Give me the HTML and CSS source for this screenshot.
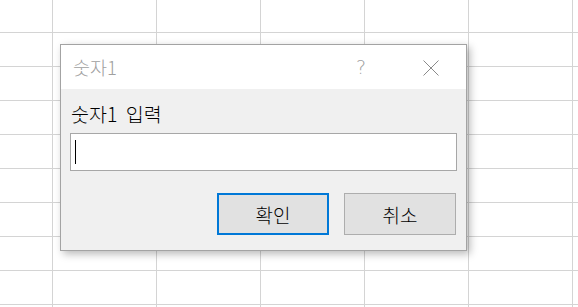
FILE: index.html
```html
<!DOCTYPE html>
<html lang="ko">
<head>
<meta charset="utf-8">
<link rel="stylesheet" href="styles.css">
</head>
<body>
<div class="sheet"></div>
<div class="dialog">
  <div class="titlebar">
    <span class="title">숫자1</span>
    <span class="help">?</span>
    <svg class="close" width="16" height="16" viewBox="0 0 16 16"><path d="M0.5 0.5 L15.5 15.5 M15.5 0.5 L0.5 15.5" stroke="#8a8a8a" stroke-width="1" fill="none"/></svg>
  </div>
  <div class="content">
    <div class="label">숫자1 입력</div>
    <div class="input"><span class="caret"></span></div>
    <div class="buttons">
      <div class="btn btn-default">확인</div>
      <div class="btn">취소</div>
    </div>
  </div>
</div>
</body>
</html>
```

FILE: styles.css
```css
html, body {
  margin: 0;
  padding: 0;
  width: 578px;
  height: 307px;
  overflow: hidden;
  background: #fff;
}
.sheet {
  width: 578px;
  height: 307px;
  background-color: #fff;
  background-image:
    linear-gradient(to bottom, transparent 33px, #d4d4d4 33px, #d4d4d4 34px),
    linear-gradient(to right, transparent 103px, #d4d4d4 103px, #d4d4d4 104px);
  background-size: 100% 34px, 104px 100%;
  background-position: 0 -1px, -51px 0;
}
.dialog {
  position: absolute;
  left: 60px;
  top: 44px;
  width: 405px;
  height: 205px;
  border: 1px solid #a3a3a3;
  background: #f0f0f0;
  box-shadow: 3px 3px 8px rgba(0, 0, 0, 0.28);
  display: flex;
  flex-direction: column;
  font-family: "Noto Sans CJK KR", "Noto Sans", sans-serif;
  font-weight: 300;
}
.titlebar {
  height: 44px;
  background: #fff;
  display: flex;
  align-items: center;
  padding-left: 12px;
  padding-right: 27px;
}
.title {
  font-size: 18.5px;
  color: #a0a0a0;
  flex: 1;
  margin-top: -1px;
}
.help {
  font-family: "DejaVu Sans", sans-serif;
  font-weight: 200;
  font-size: 19px;
  color: #a0a0a0;
  margin-right: 57px;
  margin-top: -1px;
}
.close {
  display: block;
  margin-top: 1px;
}
.content {
  flex: 1;
  padding: 13px 9px 0 9px;
  display: flex;
  flex-direction: column;
}
.label {
  font-size: 19.5px;
  color: #000;
  line-height: 24px;
  padding-left: 1px;
  word-spacing: 3px;
}
.input {
  box-sizing: border-box;
  margin-top: 7px;
  height: 38px;
  width: 387px;
  border: 1px solid #a7a7a7;
  background: #fff;
  display: flex;
  align-items: center;
  padding-left: 4px;
}
.caret {
  width: 1px;
  height: 24px;
  background: #000;
}
.buttons {
  margin-top: 22px;
  display: flex;
  justify-content: flex-end;
  gap: 15px;
  padding-right: 1px;
}
.btn {
  box-sizing: border-box;
  width: 112px;
  height: 42px;
  border: 1px solid #adadad;
  background: #e1e1e1;
  display: flex;
  align-items: center;
  justify-content: center;
  font-size: 19px;
  color: #000;
}
.btn-default {
  border: 2px solid #0078d7;
}
```
